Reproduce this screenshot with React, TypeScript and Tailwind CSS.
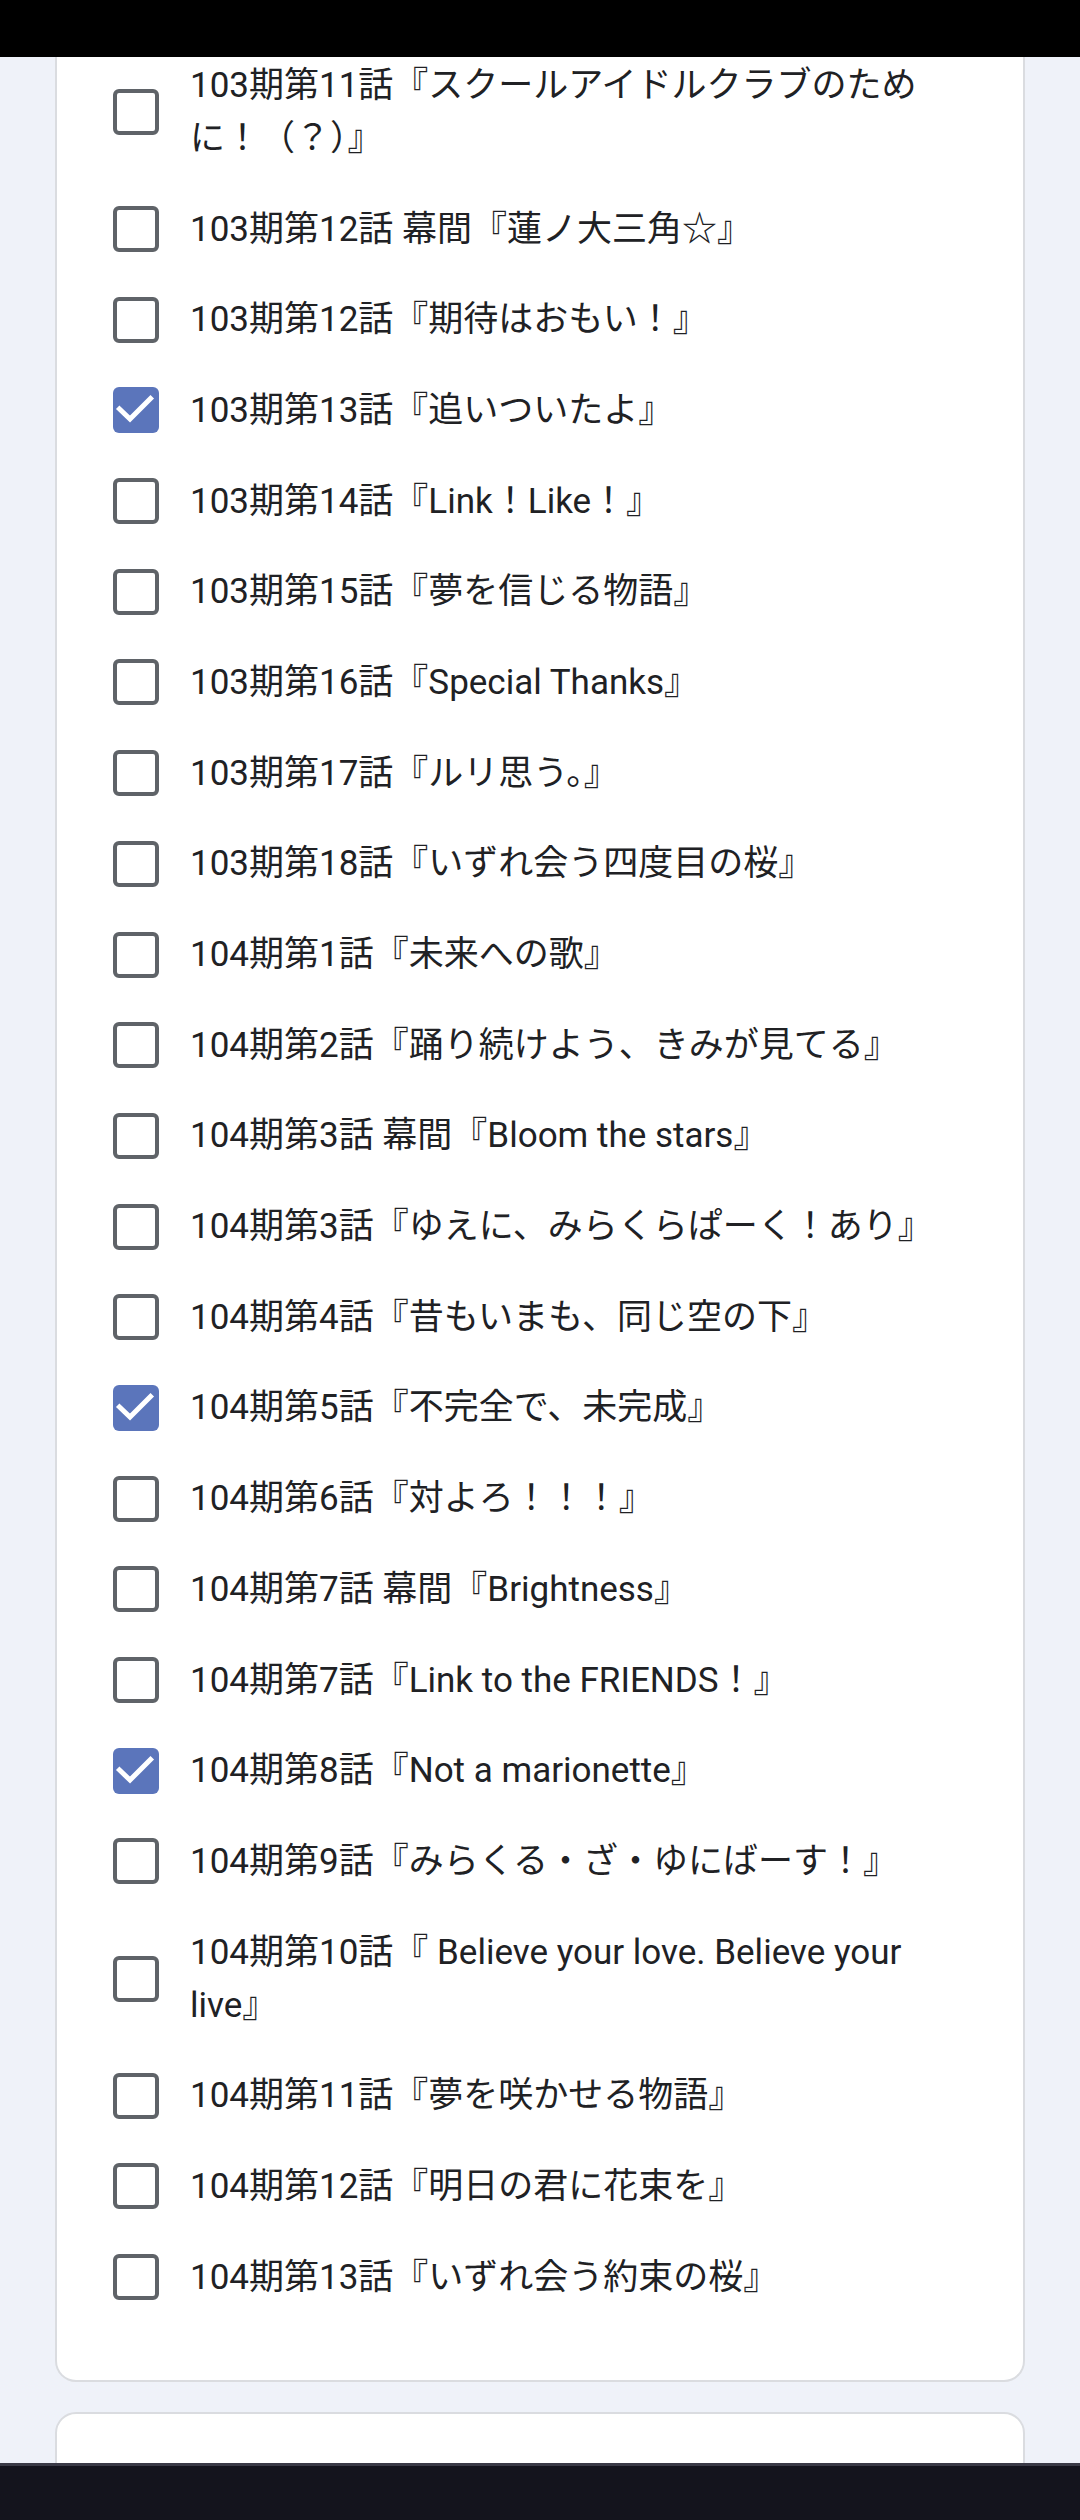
import React from 'react';

type Option = { label: string; checked?: boolean };

const OPTIONS: Option[] = [
  { label: '103期第11話『スクールアイドルクラブのために！（？）』' },
  { label: '103期第12話 幕間『蓮ノ大三角☆』' },
  { label: '103期第12話『期待はおもい！』' },
  { label: '103期第13話『追いついたよ』', checked: true },
  { label: '103期第14話『Link！Like！』' },
  { label: '103期第15話『夢を信じる物語』' },
  { label: '103期第16話『Special Thanks』' },
  { label: '103期第17話『ルリ思う。』' },
  { label: '103期第18話『いずれ会う四度目の桜』' },
  { label: '104期第1話『未来への歌』' },
  { label: '104期第2話『踊り続けよう、きみが見てる』' },
  { label: '104期第3話 幕間『Bloom the stars』' },
  { label: '104期第3話『ゆえに、みらくらぱーく！あり』' },
  { label: '104期第4話『昔もいまも、同じ空の下』' },
  { label: '104期第5話『不完全で、未完成』', checked: true },
  { label: '104期第6話『対よろ！！！』' },
  { label: '104期第7話 幕間『Brightness』' },
  { label: '104期第7話『Link to the FRIENDS！』' },
  { label: '104期第8話『Not a marionette』', checked: true },
  { label: '104期第9話『みらくる・ざ・ゆにばーす！』' },
  { label: '104期第10話『 Believe your love. Believe your live』' },
  { label: '104期第11話『夢を咲かせる物語』' },
  { label: '104期第12話『明日の君に花束を』' },
  { label: '104期第13話『いずれ会う約束の桜』' },
];

function Checkbox({ checked }: { checked?: boolean }) {
  if (checked) {
    return (
      <span className="flex h-[46px] w-[46px] shrink-0 items-center justify-center rounded-[6px] bg-[#5b75bb]">
        <svg width="46" height="46" viewBox="0 0 46 46" fill="none">
          <path d="M6.5 22 L17 32 L37.5 11.5" stroke="#ffffff" strokeWidth="5" strokeLinecap="square" />
        </svg>
      </span>
    );
  }
  return <span className="block h-[46px] w-[46px] shrink-0 rounded-[6px] border-[4px] border-[#5f6368] bg-white" />;
}

export default function App() {
  const [items, setItems] = React.useState(OPTIONS);

  const toggle = (i: number) =>
    setItems(prev => prev.map((o, j) => (j === i ? { ...o, checked: !o.checked } : o)));

  return (
    <div
      className="relative h-[2520px] overflow-hidden bg-[#eff2f9]"
      style={{ fontFamily: 'Roboto, "Noto Sans CJK JP", "Noto Sans", sans-serif' }}
    >
      {/* status bar */}
      <div className="absolute inset-x-0 top-0 z-10 h-[57px] bg-black" />

      <div className="flex flex-col gap-[30px] px-[55px]">
        {/* question card, scrolled so its top is under the status bar */}
        <div className="rounded-b-[21px] border-x-2 border-b-2 border-[#dadce0] bg-white pt-[40px] pb-[57px] pl-[56px] pr-[60px]">
          {items.map((o, i) => (
            <div
              key={i}
              onClick={() => toggle(i)}
              className="flex cursor-pointer items-center gap-[31px] py-[18.85px]"
            >
              <Checkbox checked={o.checked} />
              <span className="max-w-[750px] text-[35px] leading-[53px] text-[#202124]">{o.label}</span>
            </div>
          ))}
        </div>

        {/* next card */}
        <div className="h-[200px] rounded-t-[21px] border-2 border-[#dadce0] bg-white" />
      </div>

      {/* navigation bar */}
      <div className="absolute inset-x-0 bottom-0 z-10 h-[57px] border-t-[3px] border-[#3a3a46] bg-[#14141d]" />
    </div>
  );
}
